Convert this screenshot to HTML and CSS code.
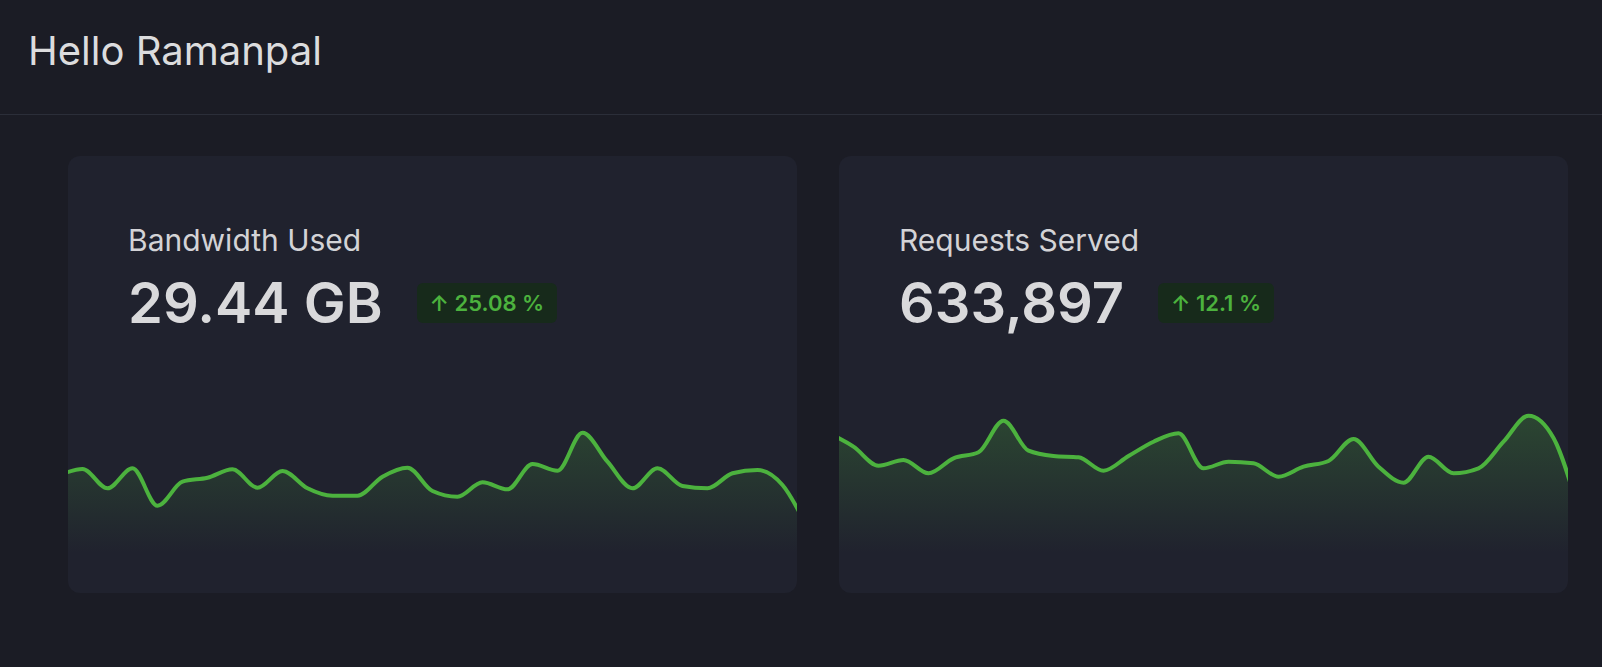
FILE: index.html
```html
<!DOCTYPE html>
<html lang="en">
<head>
<meta charset="utf-8">
<title>Dashboard</title>
<link rel="stylesheet" href="styles.css">
</head>
<body>
<header class="topbar">
  <h1 class="greeting">Hello Ramanpal</h1>
</header>
<main class="dashboard">
  <section class="card">
    <div class="card-body">
      <p class="card-label">Bandwidth Used</p>
      <div class="stat-row">
        <span class="stat-value">29.44 GB</span>
        <span class="badge">↑ 25.08 %</span>
      </div>
    </div>
    <svg class="sparkline" viewBox="0 0 729 200" preserveAspectRatio="none" data-series="bandwidth">
      <defs>
        <linearGradient id="fill-bandwidth" gradientUnits="userSpaceOnUse" x1="0" y1="20" x2="0" y2="160">
          <stop offset="0" stop-color="#4caf3c" stop-opacity="0.26"/>
          <stop offset="1" stop-color="#4caf3c" stop-opacity="0"/>
        </linearGradient>
      </defs>
      <path class="spark-area" fill="url(#fill-bandwidth)" d=""/>
      <path class="spark-line" d=""/>
    </svg>
  </section>
  <section class="card">
    <div class="card-body">
      <p class="card-label">Requests Served</p>
      <div class="stat-row">
        <span class="stat-value">633,897</span>
        <span class="badge">↑ 12.1 %</span>
      </div>
    </div>
    <svg class="sparkline" viewBox="0 0 729 200" preserveAspectRatio="none" data-series="requests">
      <defs>
        <linearGradient id="fill-requests" gradientUnits="userSpaceOnUse" x1="0" y1="20" x2="0" y2="160">
          <stop offset="0" stop-color="#4caf3c" stop-opacity="0.26"/>
          <stop offset="1" stop-color="#4caf3c" stop-opacity="0"/>
        </linearGradient>
      </defs>
      <path class="spark-area" fill="url(#fill-requests)" d=""/>
      <path class="spark-line" d=""/>
    </svg>
  </section>
</main>
<script src="script.js"></script>
</body>
</html>
```

FILE: styles.css
```css
* { box-sizing: border-box; }

html, body {
  margin: 0;
  padding: 0;
  background: #1b1c25;
  font-family: Inter, "Noto Sans", "Liberation Sans", sans-serif;
  color: #d8d8da;
}

.topbar {
  height: 115px;
  padding: 27px 28px 0;
  border-bottom: 1px solid #2b2e39;
}

.greeting {
  margin: 0;
  font-size: 40px;
  line-height: 48px;
  font-weight: 400;
  color: #dcdcde;
}

.dashboard {
  display: grid;
  grid-template-columns: 729px 729px;
  column-gap: 42px;
  padding: 41px 34px 0 68px;
}

.card {
  height: 437px;
  background: #20222e;
  border-radius: 12px;
  overflow: hidden;
  display: flex;
  flex-direction: column;
}

.card-body {
  padding: 66px 60px 0;
}

.card-label {
  margin: 0;
  font-size: 30px;
  line-height: 36px;
  font-weight: 400;
  color: #d3d3d6;
}

.stat-row {
  margin-top: 17px;
  display: flex;
  align-items: center;
  gap: 34px;
  height: 56px;
}

.stat-value {
  font-size: 56px;
  line-height: 56px;
  font-weight: 600;
  color: #d9d9db;
}

.badge {
  display: inline-flex;
  align-items: center;
  height: 40px;
  padding: 0 13px;
  border-radius: 6px;
  background: #172a1b;
  color: #4cb23e;
  font-size: 22px;
  font-weight: 600;
}

.sparkline {
  display: block;
  margin-top: auto;
  width: 729px;
  height: 200px;
}

.spark-line {
  fill: none;
  stroke: #4cb23e;
  stroke-width: 4;
  stroke-linecap: round;
  stroke-linejoin: round;
}
```

FILE: script.js
```javascript
(function () {
  var series = {
    bandwidth: [476, 469, 488.3, 468.3, 505.7, 481.7, 477.7, 469.3, 487.7, 471, 488.3, 495.7, 495.7, 476.7, 467.7, 491, 496.7, 482.3, 489.3, 464, 470.7, 432.7, 461.7, 488.3, 468.3, 486, 488.3, 473.3, 470, 485, 528],
    requests: [433, 446.7, 465.7, 460, 473.3, 458.3, 452.3, 420.7, 450.7, 456, 457.3, 470.7, 456, 441.7, 433.3, 468.3, 461.7, 463.3, 476.7, 466.7, 461, 439, 466.7, 482.7, 456.7, 473.3, 468.3, 441.7, 415.7, 438, 510]
  };
  var TOP = 393;

  function sign(v) { return v < 0 ? -1 : 1; }

  function monotone(pts) {
    var n = pts.length, t = new Array(n), i;
    for (i = 1; i < n - 1; i++) {
      var h0 = pts[i][0] - pts[i - 1][0], h1 = pts[i + 1][0] - pts[i][0];
      var s0 = (pts[i][1] - pts[i - 1][1]) / h0, s1 = (pts[i + 1][1] - pts[i][1]) / h1;
      var p = (s0 * h1 + s1 * h0) / (h0 + h1);
      t[i] = (sign(s0) + sign(s1)) * Math.min(Math.abs(s0), Math.abs(s1), 0.5 * Math.abs(p)) || 0;
    }
    var hA = pts[1][0] - pts[0][0];
    t[0] = (3 * (pts[1][1] - pts[0][1]) / hA - t[1]) / 2;
    var hB = pts[n - 1][0] - pts[n - 2][0];
    t[n - 1] = (3 * (pts[n - 1][1] - pts[n - 2][1]) / hB - t[n - 2]) / 2;
    var d = "M" + pts[0][0].toFixed(2) + "," + pts[0][1].toFixed(2);
    for (i = 0; i < n - 1; i++) {
      var x0 = pts[i][0], y0 = pts[i][1], x1 = pts[i + 1][0], y1 = pts[i + 1][1];
      var dx = (x1 - x0) / 3;
      d += "C" + (x0 + dx).toFixed(2) + "," + (y0 + dx * t[i]).toFixed(2) + " " +
        (x1 - dx).toFixed(2) + "," + (y1 - dx * t[i + 1]).toFixed(2) + " " +
        x1.toFixed(2) + "," + y1.toFixed(2);
    }
    return d;
  }

  var svgs = document.querySelectorAll(".sparkline");
  for (var s = 0; s < svgs.length; s++) {
    var svg = svgs[s];
    var ys = series[svg.getAttribute("data-series")];
    var pts = ys.map(function (y, i) { return [-10.5 + 25 * i, y - TOP]; });
    var line = monotone(pts);
    var last = pts[pts.length - 1][0], first = pts[0][0];
    svg.querySelector(".spark-line").setAttribute("d", line);
    svg.querySelector(".spark-area").setAttribute("d", line + "L" + last + ",200L" + first + ",200Z");
  }
})();
```
